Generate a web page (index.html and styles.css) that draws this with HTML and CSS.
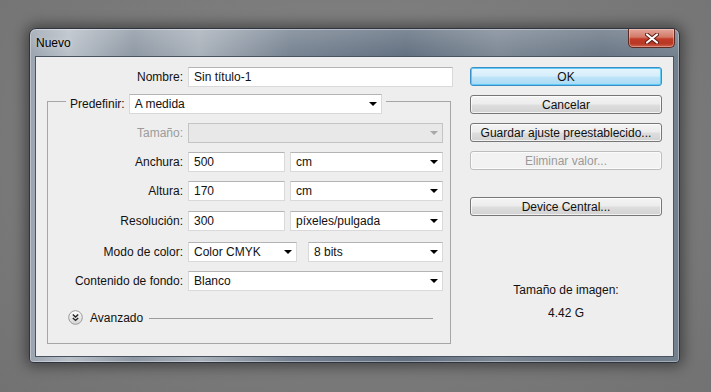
FILE: index.html
```html
<!doctype html>
<html lang="es">
    <head>
        <meta charset="UTF-8" />
        <title>Nuevo</title>
        <link rel="stylesheet" href="styles.css">
    </head>
    <body>
        <div class="window">
            <div class="titlebar">
                <span class="title">Nuevo</span>
                <div class="close">
                    <svg width="14" height="11" viewBox="0 0 14 11">
                        <path d="M2 1.5 L12 9.5 M12 1.5 L2 9.5" stroke="#5a1a12" stroke-width="4" stroke-linecap="round" />
                        <path d="M2 1.5 L12 9.5 M12 1.5 L2 9.5" stroke="#fff" stroke-width="2.2" stroke-linecap="round" />
                    </svg>
                </div>
            </div>

            <div class="client">
                <div class="main">
                    <div class="name-row">
                        <span class="label">Nombre:</span>
                        <div class="field">Sin título-1</div>
                    </div>

                    <fieldset class="preset">
                        <legend>
                            <span class="label">Predefinir:</span>
                            <div class="select preset-select">A medida</div>
                        </legend>

                        <div class="rows">
                            <span class="label disabled">Tamaño:</span>
                            <div class="select off"></div>

                            <span class="label">Anchura:</span>
                            <div class="pair">
                                <div class="field num">500</div>
                                <div class="select">cm</div>
                            </div>

                            <span class="label">Altura:</span>
                            <div class="pair">
                                <div class="field num">170</div>
                                <div class="select">cm</div>
                            </div>

                            <span class="label low">Resolución:</span>
                            <div class="pair low">
                                <div class="field num">300</div>
                                <div class="select">píxeles/pulgada</div>
                            </div>

                            <span class="label lower">Modo de color:</span>
                            <div class="pair mode lower">
                                <div class="select">Color CMYK</div>
                                <div class="select">8 bits</div>
                            </div>

                            <span class="label">Contenido de fondo:</span>
                            <div class="select">Blanco</div>
                        </div>

                        <div class="advanced">
                            <svg class="toggle" width="15" height="15" viewBox="0 0 15 15">
                                <defs>
                                    <linearGradient id="knob" x1="0" y1="0" x2="0" y2="1">
                                        <stop offset="0" stop-color="#ffffff" />
                                        <stop offset="1" stop-color="#d4d4d4" />
                                    </linearGradient>
                                </defs>
                                <circle cx="7.5" cy="7.5" r="6.8" fill="url(#knob)" stroke="#9a9a9a" />
                                <path d="M4.8 4.6 L7.5 7 L10.2 4.6 M4.8 8 L7.5 10.4 L10.2 8" fill="none" stroke="#222" stroke-width="1.4" />
                            </svg>
                            <span>Avanzado</span>
                            <span class="rule"></span>
                        </div>
                    </fieldset>
                </div>

                <div class="side">
                    <button class="btn default">OK</button>
                    <button class="btn">Cancelar</button>
                    <button class="btn">Guardar ajuste preestablecido...</button>
                    <button class="btn" disabled>Eliminar valor...</button>
                    <button class="btn device">Device Central...</button>

                    <div class="size">
                        <p>Tamaño de imagen:</p>
                        <p>4.42 G</p>
                    </div>
                </div>
            </div>
        </div>
    </body>
</html>
```

FILE: styles.css
```css
body {
    margin: 0;
    height: 392px;
    overflow: hidden;
    background: radial-gradient(ellipse at 50% 40%, #868686 0%, #7a7a7a 60%, #727272 100%);
    font-family: "Liberation Sans", Arial, sans-serif;
    font-size: 12px;
    color: #111;
}
.window {
    margin: 28px 0 0 29px;
    width: 651px;
    height: 335px;
    box-sizing: border-box;
    padding: 0 5px 5px 5px;
    border: 1px solid #2e3540;
    border-radius: 7px 7px 4px 4px;
    background:
        linear-gradient(180deg, rgba(255, 255, 255, 0.18) 0px, rgba(255, 255, 255, 0) 28px),
        linear-gradient(90deg, #9aa3ae 0%, #b9c0c8 6%, #8e98a4 16%, #a9b1ba 26%, #778392 40%, #637080 58%, #7d8895 72%, #6a7685 88%, #73808e 100%);
    box-shadow: 0 0 14px 3px rgba(0, 0, 0, 0.45), inset 0 0 0 1px rgba(255, 255, 255, 0.35);
}
.titlebar {
    height: 27px;
    display: flex;
    justify-content: space-between;
    align-items: flex-start;
}
.title {
    margin-top: 7px;
    margin-left: 1px;
    color: #000;
    text-shadow: 0 0 6px rgba(255, 255, 255, 0.6);
}
.close {
    width: 45px;
    height: 18px;
    margin-right: -1px;
    border: 1px solid #5e2a22;
    border-top: none;
    border-radius: 0 0 5px 5px;
    background: linear-gradient(180deg, #e3a79b 0%, #d37a68 45%, #c23b26 55%, #b83826 80%, #d0604a 100%);
    box-shadow: inset 0 0 0 1px rgba(255, 220, 210, 0.4);
    display: flex;
    align-items: center;
    justify-content: center;
}
.client {
    height: 301px;
    box-sizing: border-box;
    border: 1px solid #4a5461;
    background-color: #eeeeee;
    padding: 10px 11px 0 11px;
    display: flex;
    gap: 17px;
}
.main {
    flex: none;
    width: 406px;
}
.label {
    text-align: right;
    white-space: nowrap;
    line-height: 20px;
}
.label.disabled {
    color: #9b9b9b;
}
.name-row {
    display: grid;
    grid-template-columns: 136px 265px;
    column-gap: 5px;
}
.field,
.select {
    height: 20px;
    box-sizing: border-box;
    background-color: #fff;
    border: 1px solid #d9d9d9;
    border-top-color: #b4b4b4;
    padding: 0 5px;
    line-height: 18px;
    white-space: nowrap;
    position: relative;
}
.select::after {
    content: "";
    position: absolute;
    right: 4px;
    top: 7px;
    border-left: 4px solid transparent;
    border-right: 4px solid transparent;
    border-top: 4px solid #000;
}
.select.off {
    background-color: #e8e8e8;
    border-color: #c4c4c4;
}
.select.off::after {
    border-top-color: #a8a8a8;
}
.preset {
    width: 404px;
    box-sizing: border-box;
    margin: 1px 0 0 0;
    padding: 0 0 18px 0;
    border: 1px solid #a6a6a6;
    min-width: 0;
}
.preset legend {
    margin-left: 18px;
    padding: 6px 4px 0 4px;
    display: flex;
    gap: 4px;
}
.preset-select {
    width: 253px;
}
.rows {
    padding: 9px 7px 0 0;
    display: grid;
    grid-template-columns: 135px 255px;
    column-gap: 5px;
    row-gap: 9px;
}
.low {
    margin-top: 1px;
}
.lower {
    margin-top: 2px;
}
.pair {
    display: grid;
    grid-template-columns: 97px 153px;
    column-gap: 5px;
}
.pair.mode {
    grid-template-columns: 109px 135px;
    column-gap: 11px;
}
.advanced {
    margin-top: 19px;
    padding: 0 17px 0 20px;
    display: flex;
    align-items: center;
    gap: 7px;
    height: 15px;
}
.advanced .toggle {
    flex: none;
}
.advanced .rule {
    flex: 1;
    border-top: 1px solid #9c9c9c;
    margin-left: -1px;
    margin-top: 1px;
}
.side {
    flex: none;
    width: 192px;
    display: flex;
    flex-direction: column;
    gap: 9px;
}
.btn {
    height: 19px;
    padding: 0;
    font-family: inherit;
    font-size: 12px;
    color: #111;
    border: 1px solid #777;
    border-radius: 3px;
    background: linear-gradient(180deg, #f4f4f4 0%, #ececec 48%, #dedede 52%, #d2d2d2 100%);
    box-shadow: inset 0 0 0 1px rgba(255, 255, 255, 0.7);
}
.btn.default {
    border-color: #3c8fc4;
    background: linear-gradient(180deg, #e6f5fd 0%, #d5eefb 48%, #bfe4f8 52%, #a9daf5 100%);
    box-shadow: inset 0 0 0 1px #5fcaf5;
}
.btn:disabled {
    color: #9a9a9a;
    border-color: #bdbdbd;
    background: #f2f2f2;
}
.btn.device {
    margin-top: 18px;
}
.size {
    margin-top: 58px;
    text-align: center;
}
.size p {
    margin: 0 0 8px 0;
    line-height: 15px;
}
```
